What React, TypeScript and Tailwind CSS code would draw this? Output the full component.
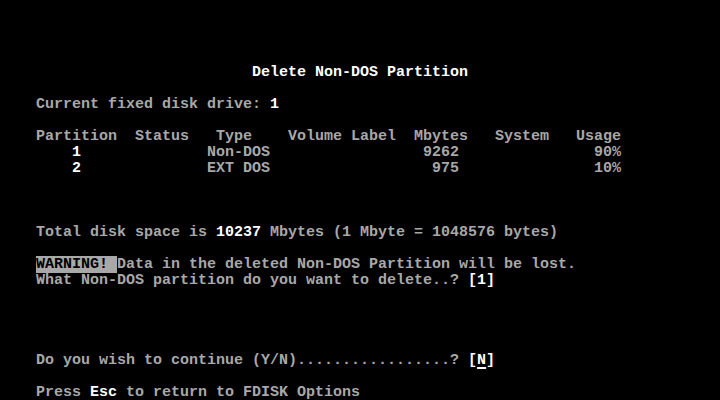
type Seg = { t: string; c?: "hi" | "inv" | "cur" };

// 80x25 text mode, each cell 9x16
const rows: Record<number, Seg[]> = {
  4: [{ t: "                            " }, { t: "Delete Non-DOS Partition", c: "hi" }],
  6: [{ t: "    Current fixed disk drive: " }, { t: "1", c: "hi" }],
  8: [{ t: "    Partition  Status   Type    Volume Label  Mbytes   System   Usage" }],
  9: [
    { t: "        " },
    { t: "1", c: "hi" },
    { t: "              Non-DOS                 9262               90%" },
  ],
  10: [
    { t: "        " },
    { t: "2", c: "hi" },
    { t: "              EXT DOS                  975               10%" },
  ],
  14: [
    { t: "    Total disk space is " },
    { t: "10237", c: "hi" },
    { t: " Mbytes (1 Mbyte = 1048576 bytes)" },
  ],
  16: [
    { t: "    " },
    { t: "WARNING! ", c: "inv" },
    { t: "Data in the deleted Non-DOS Partition will be lost." },
  ],
  17: [
    { t: "    What Non-DOS partition do you want to delete..? " },
    { t: "[1]", c: "hi" },
  ],
  22: [
    { t: "    Do you wish to continue (Y/N).................? " },
    { t: "[", c: "hi" },
    { t: "N", c: "cur" },
    { t: "]", c: "hi" },
  ],
  24: [{ t: "    Press " }, { t: "Esc", c: "hi" }, { t: " to return to FDISK Options" }],
};

function Cell({ s }: { s: Seg }) {
  if (s.c === "hi") return <span className="text-white">{s.t}</span>;
  if (s.c === "inv") return <span className="bg-[#a8a8a8] text-black">{s.t}</span>;
  if (s.c === "cur")
    return (
      <span className="text-white underline decoration-2 underline-offset-[3px]">{s.t}</span>
    );
  return <span>{s.t}</span>;
}

export default function App() {
  return (
    <div className="w-[720px] h-[400px] pt-px bg-black text-[#a8a8a8] font-['Liberation_Mono',monospace] font-bold text-[15px] leading-4 whitespace-pre overflow-hidden">
      {Array.from({ length: 25 }, (_, i) => (
        <div key={i} className="h-4">
          {(rows[i] || []).map((s, j) => (
            <Cell key={j} s={s} />
          ))}
        </div>
      ))}
    </div>
  );
}
